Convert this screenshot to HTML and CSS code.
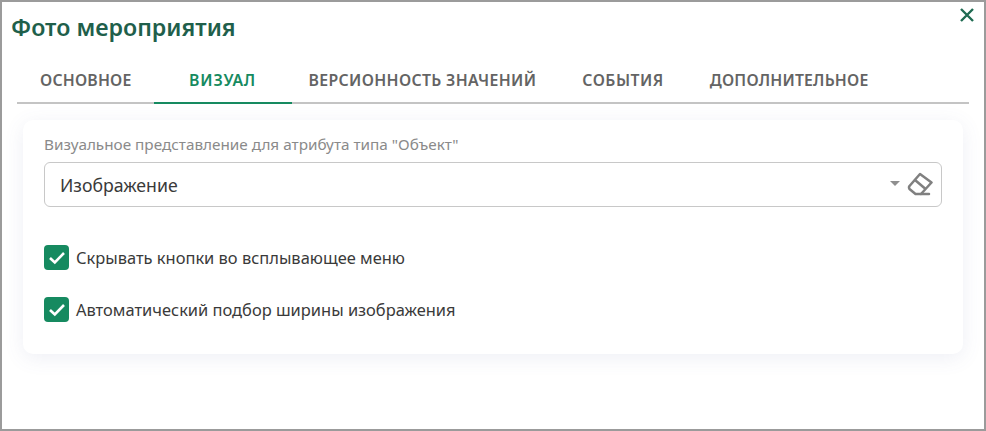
FILE: index.html
```html
<!DOCTYPE html>
<html lang="ru">
<head>
<meta charset="utf-8">
<title>Фото мероприятия</title>
<link rel="stylesheet" href="styles.css">
</head>
<body>
<div class="dialog">
  <header class="head">
    <h1 class="title">Фото мероприятия</h1>
    <button class="close" aria-label="Закрыть">
      <svg width="16" height="16" viewBox="0 0 16 16"><path d="M2 2 L14 14 M14 2 L2 14" stroke="#1f6b52" stroke-width="2.4" fill="none"/></svg>
    </button>
  </header>
  <nav class="tabs">
    <a class="tab first-tab">ОСНОВНОЕ</a>
    <a class="tab active">ВИЗУАЛ</a>
    <a class="tab after-active">ВЕРСИОННОСТЬ ЗНАЧЕНИЙ</a>
    <a class="tab events">СОБЫТИЯ</a>
    <a class="tab">ДОПОЛНИТЕЛЬНОЕ</a>
  </nav>
  <section class="card">
    <div class="label">Визуальное представление для атрибута типа "Объект"</div>
    <div class="select">
      <span class="value">Изображение</span>
      <span class="arrow"></span>
      <svg class="eraser" width="26" height="26" viewBox="0 0 26 26" fill="none" stroke="#808080" stroke-width="2.5" stroke-linejoin="round" stroke-linecap="round"><path d="M13 2 L24.5 10.5 L14 22 H8.5 L2.5 17 Q1.5 15.6 2.5 14 Z"/><path d="M8 8 L18 16.5"/><path d="M14 22 H22"/></svg>
    </div>
    <label class="check first">
      <span class="box"><svg width="18" height="14" viewBox="0 0 18 14"><path d="M2 7 L6.8 11.5 L16 2" stroke="#fff" stroke-width="2.6" fill="none"/></svg></span>
      <span>Скрывать кнопки во всплывающее меню</span>
    </label>
    <label class="check">
      <span class="box"><svg width="18" height="14" viewBox="0 0 18 14"><path d="M2 7 L6.8 11.5 L16 2" stroke="#fff" stroke-width="2.6" fill="none"/></svg></span>
      <span>Автоматический подбор ширины изображения</span>
    </label>
  </section>
</div>
</body>
</html>
```
FILE: styles.css
```css
* { box-sizing: border-box; }
html, body { margin: 0; padding: 0; height: 100%; background: #fff; }
body { font-family: "Noto Sans", sans-serif; overflow: hidden; }
.dialog {
  width: 986px;
  height: 431px;
  border: 2px solid #9b9b9b;
  background: #fff;
  padding: 0 15px;
}
.head { display: flex; justify-content: space-between; margin: 0 -6px; height: 54px; }
.title {
  margin: 0;
  padding-top: 10px;
  font-size: 23.2px;
  line-height: 30px;
  font-weight: 600;
  color: #1f5f4b;
}
.close { border: 0; background: none; padding: 0; margin: 5px 0 0 0; width: 16px; height: 16px; display: block; }
.tabs { display: flex; height: 48px; border-bottom: 2px solid #c4c4c4; }
.tab {
  display: block;
  height: 48px;
  font-size: 15.8px;
  letter-spacing: 0.2px;
  font-weight: 600;
  color: #646464;
  line-height: 48px;
  text-align: center;
  white-space: nowrap;
  padding: 0 23px;
}
.tab.first-tab { padding-right: 22px; }
.tab.active { color: #168a60; border-bottom: 2px solid #168a60; padding: 0; width: 138px; letter-spacing: 0.8px; }
.tab.after-active { margin-left: -6px; letter-spacing: 0.35px; }
.tab.events { letter-spacing: 0.5px; }
.card {
  margin: 16px 6px 0;
  height: 234px;
  background: #fff;
  border-radius: 10px;
  box-shadow: 0 4px 20px rgba(90, 100, 160, 0.10);
  padding: 14px 21px;
}
.label { font-size: 15.3px; line-height: 20px; color: #8a8a8a; }
.select {
  margin-top: 8px;
  height: 45px;
  border: 1px solid #c8c8c8;
  border-radius: 6px;
  display: flex;
  align-items: center;
  padding: 0 8px 0 15px;
}
.value { flex: 1; font-size: 17.7px; color: #3a3a3a; }
.arrow { width: 0; height: 0; border-left: 5.5px solid transparent; border-right: 5.5px solid transparent; border-top: 5.5px solid #8f8f8f; margin: -2px 7px 0 0; }
.check { display: flex; align-items: center; gap: 7px; font-size: 16.45px; line-height: 25px; color: #3a3a3a; height: 25px; }
.check.first { margin-top: 38px; margin-bottom: 27px; }
.box { width: 25px; height: 25px; border-radius: 4px; background: #168a60; display: flex; align-items: center; justify-content: center; }
```
